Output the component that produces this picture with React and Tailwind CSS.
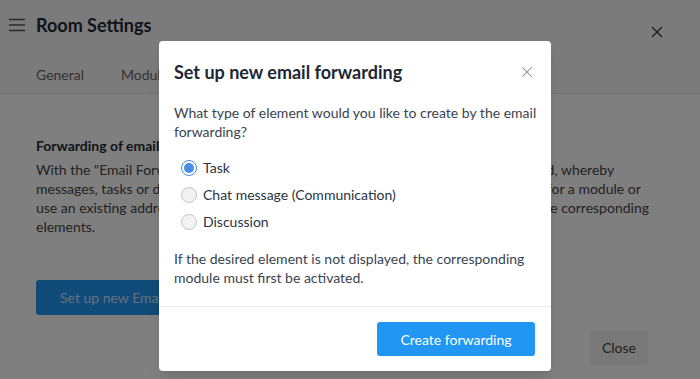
import { X } from 'lucide-react'

const lines = [
  'With the "Email Forwarding" function, a room-specific email address can be provided, whereby',
  'messages, tasks or discussions can be created easily by email. Set up a new address for a module or',
  'use an existing address. All incoming emails are then converted automatically into the corresponding',
  'elements.',
]

function Radio({ checked, label }) {
  return (
    <label className="flex items-center gap-[6px] h-[27px] text-[14px] text-[#2a3440]">
      {checked ? (
        <span className="w-[16px] h-[16px] rounded-full border border-[#4a8fe0] bg-white flex items-center justify-center">
          <span className="w-[10px] h-[10px] rounded-full bg-[#4a8fe0]" />
        </span>
      ) : (
        <span className="w-[16px] h-[16px] rounded-full border border-[#c4c4cc] bg-[#f2f2f5]" />
      )}
      {label}
    </label>
  )
}

export default function App() {
  return (
    <div className="relative w-[700px] h-[379px] overflow-hidden bg-white text-[#1f2a36]" style={{ fontFamily: 'Lato, "Noto Sans", sans-serif' }}>
      {/* Seite darunter */}
      <div className="bg-[#f6f6f6] border-b border-[#e4e4e4] h-[94px]">
        <div className="flex items-center h-[50px] pl-[9px] pr-[34px]">
          <svg width="17" height="14" viewBox="0 0 17 14" className="mr-[10px]">
            <path d="M0 1.5H16M0 7H16M0 12.5H16" stroke="#555" strokeWidth="1.3" />
          </svg>
          <h1 className="text-[18px] font-bold flex-1">Room Settings</h1>
          <X size={18} strokeWidth={1.6} className="text-[#333] mt-[14px]" />
        </div>
        <div className="flex gap-[37px] pl-[36px] pt-[14px] text-[14px] text-[#666]">
          <span>General</span>
          <span>Modules</span>
        </div>
      </div>
      <div className="px-[36px] pt-[42px]">
        <h2 className="text-[14px] font-bold leading-[20px]">Forwarding of emails</h2>
        <div className="mt-[4px] text-[14px] leading-[19px] text-[#444] w-[630px]">
          {lines.map((l) => (
            <div key={l} className="whitespace-nowrap">{l}</div>
          ))}
        </div>
        <button className="mt-[44px] h-[35px] px-[24px] rounded-[3px] bg-[#2196f3] text-white/75 text-[14px]">
          Set up new Email Forwarding
        </button>
      </div>
      <div className="absolute right-[52px] bottom-[14px]">
        <button className="w-[58px] h-[35px] rounded-[3px] bg-[#f1f1f1] text-[14px] text-[#444]">Close</button>
      </div>

      {/* Overlay */}
      <div className="absolute inset-0 bg-black/50" />

      {/* Dialog */}
      <div className="absolute left-[159px] top-[41px] w-[392px] h-[330px] bg-white rounded-[4px] shadow-lg flex flex-col">
        <div className="flex items-center justify-between h-[62px] pl-[15px] pr-[15px]">
          <h3 className="text-[18px] font-bold text-[#1c2733]">Set up new email forwarding</h3>
          <X size={18} strokeWidth={1.4} className="text-[#8a8a8a]" />
        </div>
        <div className="pl-[15px] pr-[10px] text-[14px] leading-[19px] text-[#3a4350]">
          <p>What type of element would you like to create by the email forwarding?</p>
          <div className="mt-[13px] pl-[7px]">
            <Radio checked label="Task" />
            <Radio label="Chat message (Communication)" />
            <Radio label="Discussion" />
          </div>
          <p className="mt-[14px] pr-[5px]">If the desired element is not displayed, the corresponding module must first be activated.</p>
        </div>
        <div className="mt-auto border-t border-[#ececf4] h-[65px] flex items-center justify-end pr-[16px]">
          <button className="w-[158px] h-[34px] rounded-[3px] bg-[#2196f3] text-white text-[14px]">Create forwarding</button>
        </div>
      </div>
    </div>
  )
}
